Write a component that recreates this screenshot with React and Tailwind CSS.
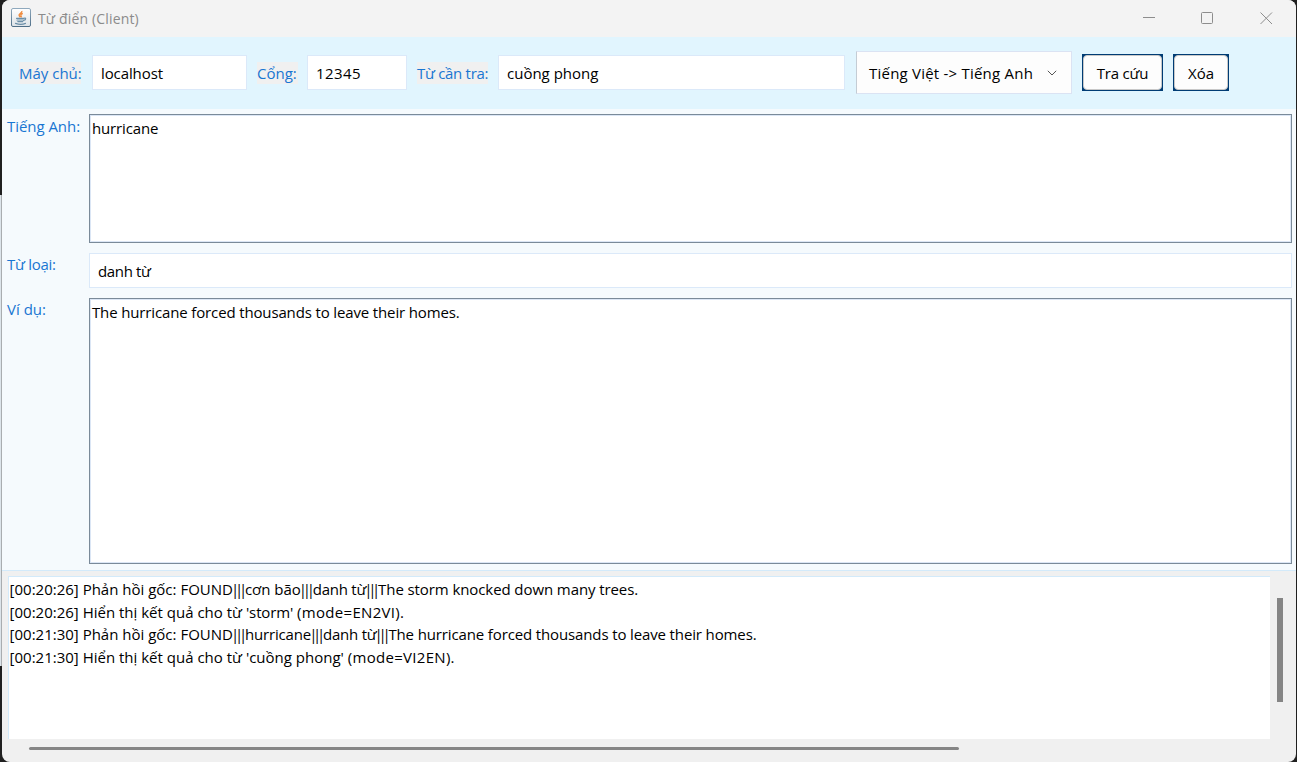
import React from "react";

const Label = ({ children, className }) => (
  <label className={`whitespace-nowrap text-[#1976d2] ${className}`}>{children}</label>
);

const Field = ({ children, className }) => (
  <div className={`flex h-[35px] items-center whitespace-pre border border-[#dbe9f9] bg-white pl-2 ${className}`}>
    {children}
  </div>
);

const PushButton = ({ children, className }) => (
  <button className={`h-[37px] bg-[#003c74] p-px ${className}`}>
    <span className="flex h-full w-full items-center justify-center rounded-[4px] border border-[#c8c8c8] bg-[#fdfdfd] pt-px">
      <span className="whitespace-nowrap">{children}</span>
    </span>
  </button>
);

const JavaIcon = () => (
  <svg width="20" height="20" viewBox="0 0 20 20" className="mb-px shrink-0">
    <defs>
      <linearGradient id="frame" x1="0" y1="0" x2="0" y2="1">
        <stop offset="0" stopColor="#8fa9bd" />
        <stop offset="1" stopColor="#4f6f88" />
      </linearGradient>
      <linearGradient id="face" x1="0" y1="0" x2="0" y2="1">
        <stop offset="0" stopColor="#ffffff" />
        <stop offset="1" stopColor="#dde3e8" />
      </linearGradient>
    </defs>
    <rect x="0.5" y="0.5" width="19" height="18" rx="1.5" fill="url(#face)" stroke="url(#frame)" />
    <path d="M10.800 3c.8 1.800-2.700 2.400-2.700 4 0 1 1 1.500 1.300 2.300M11.800 5.300c-1.500.6-2.200 1.300-1.800 2.200.4.700.5 1.200-.1 1.800" fill="none" stroke="#f08a3c" strokeWidth="1.400" />
    <path d="M5.500 10.300h7.500M6 12h6.500M6.800 13.600h5M13 10.200c2-.7 2.600 1.400-.4 2.300M4.500 15.400c3 1 7.500 1 10 0" fill="none" stroke="#6c8fa8" strokeWidth="1.200" strokeLinecap="round" />
  </svg>
);

const Bars = () => <span className="-ml-[2px] mr-[2px] tracking-[-4.26px]">|||</span>;

const Row = ({ children }) => <p className="h-[22.67px] whitespace-pre">{children}</p>;

export default function App() {
  return (
    <div className="flex h-[762px] w-[1297px] overflow-hidden bg-[#202020] pr-px font-['Open_Sans','Noto_Sans',sans-serif] text-[15px] leading-[22px] text-black">
      <div className="flex w-[2px] shrink-0 flex-col">
        <div className="h-[195px] bg-[#202020]" />
        <div className="h-[471px] border-r border-[#a9adb0] bg-[#dce4ea]" />
      </div>
      <div className="flex min-w-0 flex-1 flex-col overflow-hidden rounded-[8px] bg-[#f0f0f0]">
        <header className="flex h-[37px] shrink-0 items-center bg-[#f3f3f3] pl-[9px]">
          <JavaIcon />
          <span className="ml-[7px] text-[14px] tracking-[0.15px] text-[#8b8b8b]">Từ điển (Client)</span>
          <svg className="mb-[2px] ml-auto mr-[22px] shrink-0" width="132" height="14" viewBox="0 0 132 14" fill="none" stroke="#8d8d8d">
            <path d="M1 6.500h12" />
            <rect x="59.500" y="1.500" width="11" height="11" rx="1" />
            <path d="M118.500 1.500l11.500 11.500M130 1.500l-11.500 11.500" />
          </svg>
        </header>

        <section className="flex h-[72px] shrink-0 items-center bg-[#e1f5fe] pb-[2px] pl-[17px]">
          <Label className="mt-px w-[62px] bg-[#f0f0f0]">Máy chủ:</Label>
          <Field className="ml-[11px] w-[155px] pt-px tracking-[-0.1px]">localhost</Field>
          <Label className="ml-[10px] mt-px w-[41px] bg-[#f0f0f0]">Cổng:</Label>
          <Field className="ml-[9px] w-[100px] pt-px tracking-[0.45px]">12345</Field>
          <Label className="ml-[10px] mt-px w-[71px] bg-[#f0f0f0] tracking-[-0.3px]">Từ cần tra:</Label>
          <Field className="ml-[10px] w-[347px] pt-px">cuồng phong</Field>
          <div className="ml-[11px] flex h-[43px] w-[216px] items-center justify-between border border-[#dbe3f3] border-l-[#c4ccd4] bg-[#fdfdfd] pl-3 pr-[14px] pt-px">
            <span className="whitespace-nowrap tracking-[0.22px]">Tiếng Việt -&gt; Tiếng Anh</span>
            <svg width="10" height="6" viewBox="0 0 10 6" fill="none" stroke="#555">
              <path d="M.8 .8l4.200 4.200 4.200-4.200" />
            </svg>
          </div>
          <PushButton className="ml-[10px] w-[81px] tracking-[-0.2px]">Tra cứu</PushButton>
          <PushButton className="ml-[10px] w-[56px]">Xóa</PushButton>
        </section>

        <section className="flex h-[462px] shrink-0 flex-col border-b border-[#d3eafa] bg-[#f5fafd] pl-[5px] pr-1 pt-[5px]">
          <div className="flex h-[129px]">
            <Label className="w-[82px] pt-px tracking-[-0.05px]">Tiếng Anh:</Label>
            <div className="flex-1 border border-[#7a8a99] bg-white">
              <div className="h-full border border-[#dbe6f5] pl-px pt-px tracking-[-0.15px]">hurricane</div>
            </div>
          </div>
          <div className="mt-[10px] flex h-[35px]">
            <Label className="w-[82px] tracking-[-0.3px]">Từ loại:</Label>
            <Field className="flex-1 tracking-[-0.35px]">danh từ</Field>
          </div>
          <div className="mt-[10px] flex h-[266px]">
            <Label className="w-[82px]">Ví dụ:</Label>
            <div className="flex-1 border border-[#7a8a99] bg-white">
              <div className="h-full border border-[#dbe6f5] pl-px pt-px tracking-[-0.14px]">
                The hurricane forced thousands to leave their homes.
              </div>
            </div>
          </div>
        </section>

        <section className="flex flex-1 flex-col pl-[6px] pt-[5px]">
          <div className="flex">
            <div className="h-[163px] w-[1262px] border-l border-t border-[#d3eafa] bg-white pl-[0.6px] pt-px">
              <Row>
                [00:20:26] Phản hồi gốc: FOUND<Bars />cơn bão<Bars />
                <span className="tracking-[-0.25px]">danh từ</span><Bars />
                <span className="tracking-[-0.09px]">The storm knocked down many trees.</span>
              </Row>
              <Row>
                [00:20:26] Hiển thị kết quả cho từ <span className="tracking-[-0.1px]">'storm' </span>
                <span className="tracking-[0.3px]">(mode=EN2VI).</span>
              </Row>
              <Row>
                [00:21:30] Phản hồi gốc: FOUND<Bars />
                <span className="tracking-[-0.15px]">hurricane</span><Bars />
                <span className="tracking-[-0.25px]">danh từ</span><Bars />
                <span className="tracking-[-0.13px]">The hurricane forced thousands to leave their homes.</span>
              </Row>
              <Row>
                [00:21:30] Hiển thị kết quả cho từ 'cuồng phong' <span className="tracking-[0.3px]">(mode=VI2EN).</span>
              </Row>
            </div>
            <div className="ml-[7px] mt-[22px] h-[104px] w-[6px] bg-[#858585]" />
          </div>
          <div className="ml-[21px] mt-[8px] h-[3px] w-[930px] rounded-full bg-[#858585]" />
        </section>
      </div>
    </div>
  );
}
